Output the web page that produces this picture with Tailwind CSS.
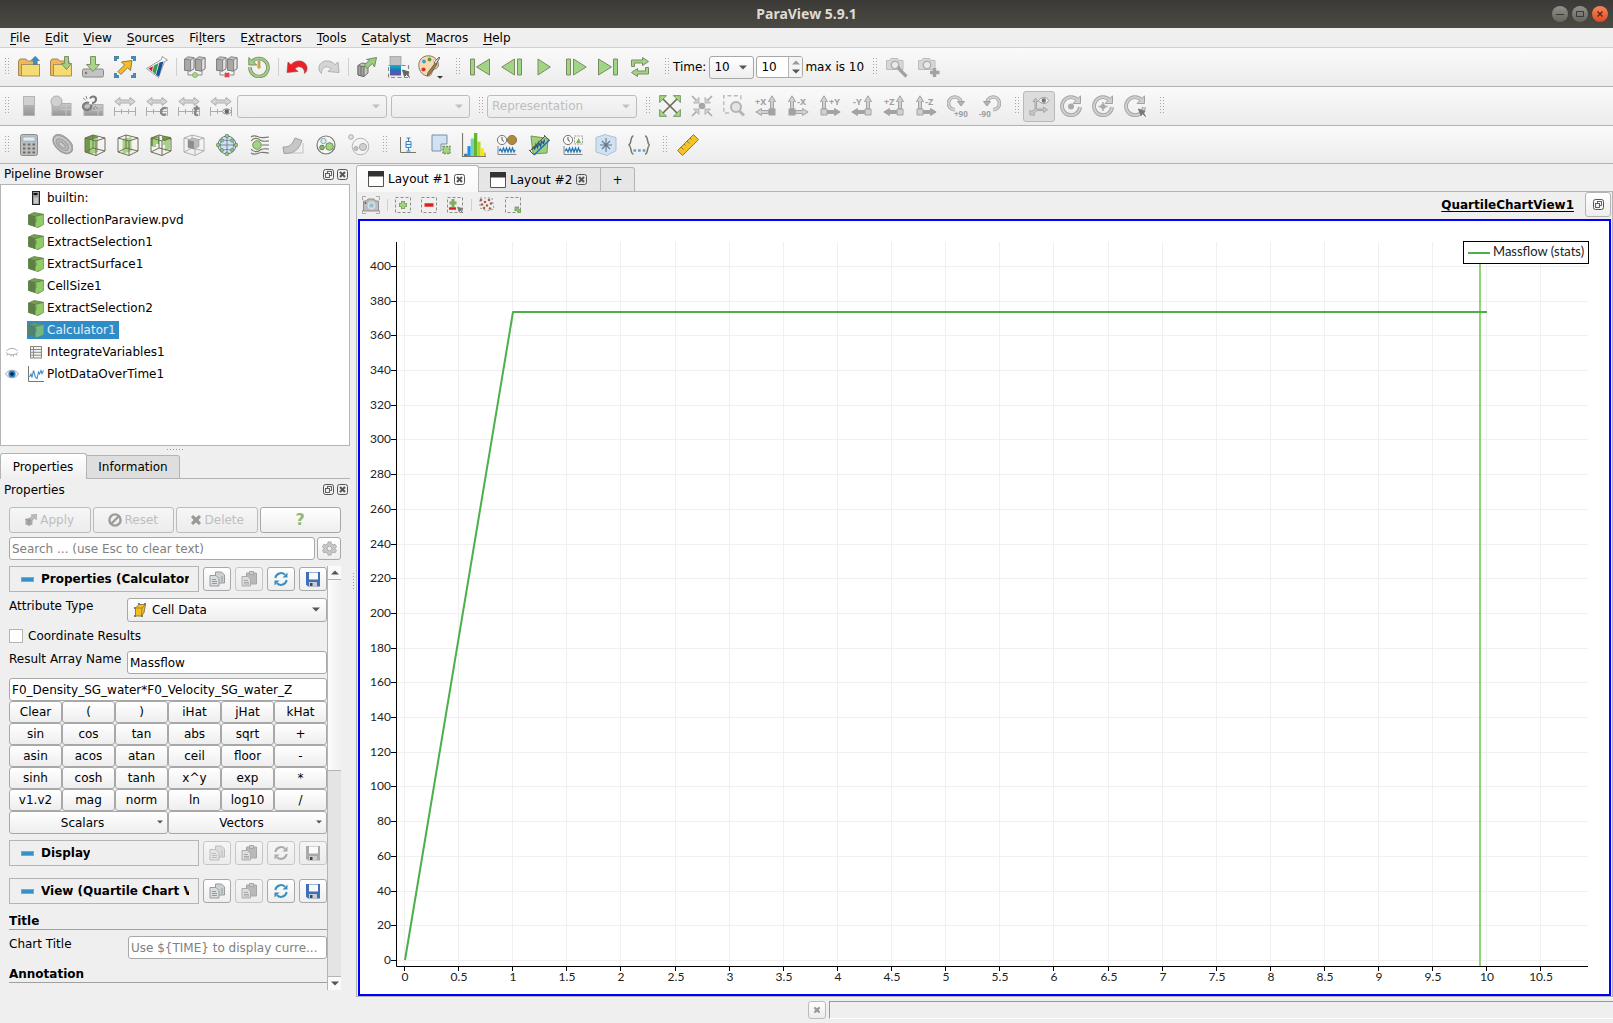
<!DOCTYPE html>
<html lang="en">
  <head>
    <meta charset="UTF-8" />
    <meta name="viewport" content="width=device-width, initial-scale=1.0" />
    <title>ParaView 5.9.1</title>
    <!-- Tailwind -->
    <script src="https://cdn.jsdelivr.net/npm/@tailwindcss/browser@4"></script>
    <style>
      body {
        font-family: "DejaVu Sans", sans-serif;
      }
    </style>
  </head>
  <body class="h-screen flex flex-col overflow-hidden bg-[#efefef] text-xs text-black">
    <!-- Icons -->
    <svg class="absolute size-0">
      <defs>
        <linearGradient id="rainbow" x1="0" y1="0" x2="0" y2="1">
          <stop offset="0" stop-color="#14b4c4" />
          <stop offset="0.5" stop-color="#2070b8" />
          <stop offset="1" stop-color="#7a4a9a" />
        </linearGradient>
        <linearGradient id="shade" x1="0" y1="0" x2="0" y2="1">
          <stop offset="0" stop-color="#cacaca" />
          <stop offset="1" stop-color="#969696" />
        </linearGradient>
      </defs>
      <!-- file -->
      <symbol id="i-open" viewBox="0 0 22 22">
        <path d="M.5 19.500V5L2 3h6l1.500 2H19v14z" fill="#efb65c" stroke="#a58a52" />
        <rect x="3.500" y="8.500" width="18" height="11.500" fill="#f5dc72" stroke="#a5915a" />
        <path d="M15.500 8.500V4.500H13L17.200.3l4.200 4.200h-2.600v4z" fill="#3592c8" stroke="#47738f" stroke-width=".6" />
      </symbol>
      <symbol id="i-load" viewBox="0 0 22 22">
        <path d="M.5 19.500V5L2 3h6l1.500 2H19v14z" fill="#efb65c" stroke="#a58a52" />
        <path d="M3.500 20V8.500h18V20z" fill="#f5dc72" stroke="#a5915a" />
        <path d="M14.500.5h4v7h3L16.500 13.500 11.500 7.500h3z" fill="#a1cf86" stroke="#7e8f64" />
      </symbol>
      <symbol id="i-save" viewBox="0 0 22 22">
        <rect x=".5" y="13" width="21" height="8" rx="1.500" fill="#c4c4c4" stroke="#888" />
        <circle cx="4" cy="17" r="1.200" fill="#777" />
        <path d="M8.500.5h5v8h4L11 15.500 4.500 8.500h4z" fill="#a9d48c" stroke="#7e8f64" />
      </symbol>
      <symbol id="i-extract" viewBox="0 0 22 22">
        <path d="M1.500 5V1.500H5M17 1.500h3.500V5M20.500 17v3.500H17M5 20.500H1.500V17" fill="none" stroke="#5f7480" stroke-width="3" />
        <path d="M1.500 5V1.500H5M17 1.500h3.500V5M20.500 17v3.500H17M5 20.500H1.500V17" fill="none" stroke="#3a93c4" stroke-width="2" />
        <path d="M4 15.500l6.500-6.500L7.500 6 18 4.500 16.500 14.500l-3-2.800L7 18.500z" fill="#f5bd1f" stroke="#8a7a4a" />
      </symbol>
      <symbol id="i-flask" viewBox="0 0 22 22">
        <path d="M.5 12.500L15.500 3.500l.5-3 5.500 3.500-3 1.500L12.500 21.500z" fill="#fafafa" stroke="#888" stroke-width=".8" />
        <path d="M2.500 12.500l4.500-2.500-1 5.500z" fill="#d62032" />
        <path d="M8 9.500l4.500-2.500-3 11.500-3-3z" fill="#2fa24a" />
        <path d="M13.500 6.500l4-1-4.500 15-3-1.500z" fill="#17519e" />
      </symbol>
      <symbol id="i-server" viewBox="0 0 22 22">
        <g stroke="#808080" stroke-width=".9">
          <path d="M.6 3L4 .8l6 .8v11L6.500 15l-6-.8z" fill="#c4c4c0" />
          <path d="M.6 3l6 1V15l-6-.8z" fill="#a9a9a4" />
          <path d="M6.600 4L10 1.600v11L6.600 15z" fill="#e4e0e2" />
          <path d="M11.600 3L15 .8l6 .8v11L17.500 15l-6-.8z" fill="#c4c4c0" />
          <path d="M11.600 3l6 1V15l-6-.8z" fill="#a9a9a4" />
          <path d="M17.600 4L21 1.600v11L17.600 15z" fill="#e4e0e2" />
          <path d="M4 15v4h14v-4" fill="none" />
        </g>
      </symbol>
      <symbol id="i-connect" viewBox="0 0 22 22">
        <use href="#i-server" width="22" height="22" />
        <circle cx="11" cy="19" r="2.500" fill="#a3dc86" stroke="#7d9a69" stroke-width=".7" />
      </symbol>
      <symbol id="i-disconnect" viewBox="0 0 22 22">
        <use href="#i-server" width="22" height="22" />
        <path d="M9 17l4 4m0-4l-4 4" stroke="#d44" stroke-width="2.400" />
      </symbol>
      <symbol id="i-recent" viewBox="0 0 22 22">
        <path d="M3.500 6.500A9 9 0 1 1 2 11" fill="none" stroke="#7e8f64" stroke-width="3.600" />
        <path d="M.8 1.500v7.500h8z" fill="#a1cf86" stroke="#7e8f64" />
        <path d="M3.500 6.500A9 9 0 1 1 2 11" fill="none" stroke="#a1cf86" stroke-width="2" />
        <path d="M10 5h2v7h-2z" fill="#e3b23c" stroke="#9b854e" stroke-width=".6" />
        <circle cx="11" cy="11" r="1.600" fill="#d6a93a" />
      </symbol>
      <symbol id="i-undo" viewBox="0 0 22 22">
        <path d="M1 16.500L2 6l3 2.700C9 3.500 19 3 21 11c.4 2.500-.5 5-2.500 6.500C19 12 13.500 8.500 9 12.500l3 3z" fill="#ea2127" stroke="#a63a3a" stroke-width=".6" />
      </symbol>
      <symbol id="i-redo" viewBox="0 0 22 22">
        <path d="M21 16.500L20 6l-3 2.700C13 3.500 3 3 1 11c-.4 2.500.5 5 2.500 6.500C3 12 8.500 8.500 13 12.500l-3 3z" fill="#d4d4d4" stroke="#b0b0b0" />
      </symbol>
      <symbol id="i-query" viewBox="0 0 22 22">
        <g stroke="#6a6a62" stroke-width=".9">
          <path d="M2 9.500l4-2.500 6 1V17l-4 3.500-6-1.500z" fill="#c6c6c2" />
          <path d="M2 9.500l6 1.200v9.800l-6-1.500z" fill="#a4a4a0" />
          <path d="M5 10v9.700M8 10.700l4-2.700" fill="none" />
        </g>
        <path d="M8.500 9l5-5L10.500 3.500 20.500 1.500 18.500 11l-2-3.500-5.500 5z" fill="#98cf80" stroke="#7a8a62" />
      </symbol>
      <symbol id="i-selcolor" viewBox="0 0 22 22">
        <rect x=".5" y="9.500" width="20" height="12" fill="none" stroke="#888" stroke-width="1.200" stroke-dasharray="4 2.500" />
        <rect x="2" y=".5" width="11" height="9" fill="#c2c2c2" stroke="#999" stroke-width=".7" />
        <rect x="2" y="9" width="11" height="10.500" fill="url(#rainbow)" />
        <path d="M21.500 21.500l-3-3-2 2-2-6.500 6.500 2-2 2z" fill="#666" stroke="#666" />
      </symbol>
      <symbol id="i-palette" viewBox="0 0 26 24">
        <path d="M10 .8C4 1 .8 5.500.8 10.500c0 6 4.500 10.500 9.500 10.500 4 0 3-4 5-6s4-1 5-4C21 5 16 .6 10 .8z" fill="#f9d9b0" stroke="#857868" />
        <circle cx="6" cy="6.500" r="1.900" fill="#3f9fd0" /><circle cx="11.500" cy="4.500" r="1.900" fill="#5c9a3c" />
        <circle cx="5.500" cy="14.500" r="2.100" fill="#cf3b2b" /><circle cx="17" cy="6" r="1.600" fill="#fff" stroke="#a99" stroke-width=".5" />
        <path d="M21.500 2c0 3-3 4-3 8l-6.500 9-3 2 1-3.500L16.500 9c0-4 3-4 5-7z" fill="#9a8050" stroke="#5c5238" stroke-width=".8" />
        <path d="M21.500 2c0 3-3 4-3 7l-2-1c0-3 3-3 5-6z" fill="#eee" stroke="#5c5238" stroke-width=".6" />
        <path d="M19 21h6l-3 2.800z" fill="#333" />
      </symbol>
      <!-- VCR -->
      <symbol id="i-first" viewBox="0 0 22 22">
        <path d="M1.500 3h4v16h-4zM20.500 3v16L7.500 11z" fill="#a1d586" stroke="#7d8a64" />
      </symbol>
      <symbol id="i-back" viewBox="0 0 22 22">
        <path d="M16.500 3h4v16h-4zM13.500 3v16L.8 11z" fill="#a1d586" stroke="#7d8a64" />
      </symbol>
      <symbol id="i-play" viewBox="0 0 22 22">
        <path d="M5 3v16L17.300 11z" fill="#a1d586" stroke="#7d8a64" />
      </symbol>
      <symbol id="i-fwd" viewBox="0 0 22 22">
        <path d="M1.500 3h4v16h-4zM8.500 3v16L21.200 11z" fill="#a1d586" stroke="#7d8a64" />
      </symbol>
      <symbol id="i-last" viewBox="0 0 22 22">
        <path d="M16.500 3h4v16h-4zM1.500 3v16L14.500 11z" fill="#a1d586" stroke="#7d8a64" />
      </symbol>
      <symbol id="i-loop" viewBox="0 0 22 22">
        <path d="M2.500 10.500V4h11V1.500L19.500 5.500 13.500 9.500V7h-8v3.500zM19.500 11.500V18h-11v2.500L2.500 16.500 8.500 12.500V15h8v-3.500z" fill="#a1d586" stroke="#7d8a64" />
      </symbol>
      <symbol id="i-camera" viewBox="0 0 22 22">
        <path d="M.6 4.500h3L5 2.500h6.500l1.500 2h4v9H.6z" fill="#d8d8d8" stroke="#bbb" />
        <circle cx="9" cy="9" r="3.800" fill="#e9e9e9" stroke="#b0b0b0" stroke-width="1.500" />
      </symbol>
      <symbol id="i-camtool" viewBox="0 0 22 22">
        <use href="#i-camera" width="22" height="22" />
        <path d="M12 10.500l2 3.500 6.500 6.500" fill="none" stroke="#a2a2a2" stroke-width="3.200" />
      </symbol>
      <symbol id="i-camplus" viewBox="0 0 22 22">
        <use href="#i-camera" width="22" height="22" />
        <path d="M16.500 12v9M12 16.500h9.500" stroke="#a2a2a2" stroke-width="3.400" />
      </symbol>
      <!-- colour -->
      <symbol id="i-legend" viewBox="0 0 22 22">
        <rect x="5.500" y="1.500" width="11" height="19" fill="url(#shade)" stroke="#b5b5b5" />
        <path d="M6 2h10v8H6z" fill="#d0d0d0" />
      </symbol>
      <symbol id="i-mapedit" viewBox="0 0 22 22">
        <rect x="2" y="8.500" width="19" height="12" fill="url(#shade)" stroke="#b0b0b0" />
        <path d="M16 9v11M11 14.500h10" stroke="#c4c4c4" />
        <circle cx="6.500" cy="6.500" r="5.500" fill="#d0d0d0" stroke="#aaa" />
      </symbol>
      <symbol id="i-mapsep" viewBox="0 0 22 22">
        <rect x="2" y="9.500" width="19" height="11" fill="url(#shade)" stroke="#b0b0b0" />
        <path d="M16 10v10M10 15h11" stroke="#c4c4c4" />
        <path d="M8 3.500C10 .5 14 1 14 4.500c0 2-2 3.500-4 3.500M7 8c-3-1-6 1-6 3.500S4 16 7 14.500c2-1 2.500-3 2-4.500" fill="none" stroke="#7c7c7c" stroke-width="2.200" />
        <path d="M1 3l2.500 2M4 1l1 3M13 11l3 3M12 12v3" stroke="#888" />
      </symbol>
      <symbol id="i-range" viewBox="0 0 22 22">
        <path d="M.8 6.500L6 2.500V5h10V2.500L21.200 6.500 16 10.500V8H6v2.500z" fill="#d4d4d4" stroke="#adadad" />
        <path d="M.5 12v9M21.500 12v9M.5 16.500h21M7.500 14v5M14.500 14v5" fill="none" stroke="#adadad" />
      </symbol>
      <symbol id="i-rangec" viewBox="0 0 22 22">
        <use href="#i-range" width="22" height="22" />
        <path d="M20.500 13.500c-2-1.500-5.500 0-5.500 3.500 0 3 3 3.500 5 2" fill="none" stroke="#858585" stroke-width="2.400" />
      </symbol>
      <symbol id="i-ranget" viewBox="0 0 22 22">
        <use href="#i-range" width="22" height="22" />
        <path d="M19 10.500l-2 8c0 1.500 1.500 2 3 1M15.500 13.500h5.500" fill="none" stroke="#858585" stroke-width="2.300" />
      </symbol>
      <symbol id="i-rangeeye" viewBox="0 0 22 22">
        <use href="#i-range" width="22" height="22" />
        <path d="M12 16.500c2.500-3.500 7-3.500 9.500 0-2.500 3.500-7 3.500-9.500 0z" fill="#eee" stroke="#888" />
        <circle cx="16.800" cy="16.500" r="2.200" fill="#666" />
      </symbol>
      <!-- camera -->
      <symbol id="i-reset" viewBox="0 0 22 22">
        <path d="M3 3l16 16M19 3L3 19" stroke="#6a6a50" stroke-width="1.600" />
        <path d="M.6.6h7l-7 7zM21.400.6v7l-7-7zM.6 21.400v-7l7 7zM21.400 21.400h-7l7-7z" fill="#9fd77f" stroke="#6f8558" stroke-width=".8" />
      </symbol>
      <symbol id="i-zoomdata" viewBox="0 0 22 22">
        <path d="M1 1l5 5M21 1l-5 5M1 21l5-5M21 21l-5-5" stroke="#aaa" stroke-width="1.600" />
        <path d="M8 8H2.500L8 2.500zM14 8V2.500L19.500 8zM8 14v5.500L2.500 14zM14 14h5.500L14 19.500z" fill="#d2d2d2" stroke="#aaa" stroke-width=".8" />
        <circle cx="11" cy="11" r="3.300" fill="#a6a6a6" />
      </symbol>
      <symbol id="i-zoombox" viewBox="0 0 22 22">
        <path d="M6 18H.8V.8h17V6" fill="none" stroke="#bbb" stroke-width="1.400" stroke-dasharray="4 2.500" />
        <circle cx="13" cy="12" r="5" fill="#e4e4e4" stroke="#b4b4b4" stroke-width="2" />
        <path d="M16.500 16l4.500 4.500" stroke="#b4b4b4" stroke-width="3" />
      </symbol>
      <symbol id="i-axl" viewBox="0 0 22 22">
        <path d="M15.500 13.500v-7h-2L17 .8l3.500 5.700h-2v7z" fill="#d0d0d0" stroke="#a3a3a3" />
        <path d="M13.500 15.500h-7v-2L.8 17l5.700 3.500v-2h7z" fill="currentColor" stroke="#a3a3a3" />
      </symbol>
      <symbol id="i-axr" viewBox="0 0 22 22">
        <path d="M3.500 13.500v-7h-2L5 .8l3.500 5.700h-2v7z" fill="#d0d0d0" stroke="#a3a3a3" />
        <path d="M8.500 15.500h7v-2l5.700 3.500-5.700 3.500v-2h-7z" fill="currentColor" stroke="#a3a3a3" />
      </symbol>
      <symbol id="i-rotcw" viewBox="0 0 22 22">
        <path d="M8 14.500H6.500A6.300 6.300 0 1 1 14 7" fill="none" stroke="#a8a8a8" stroke-width="3.600" />
        <path d="M8 14.500H6.500A6.300 6.300 0 1 1 14 7" fill="none" stroke="#d4d4d4" stroke-width="1.800" />
        <path d="M10.500 6.500h7L14 11z" fill="#b4b4b4" stroke="#a0a0a0" />
      </symbol>
      <symbol id="i-rotate" viewBox="0 0 22 22">
        <path d="M18 5.500A9 9 0 1 0 20 12" fill="none" stroke="#a4a4a4" stroke-width="3.800" />
        <path d="M13 8.500L20.500.8v7.700z" fill="#cfcfcf" stroke="#a4a4a4" />
        <path d="M18 5.500A9 9 0 1 0 20 12" fill="none" stroke="#cfcfcf" stroke-width="2" />
      </symbol>
      <symbol id="i-axesvis" viewBox="0 0 22 22">
        <path d="M7 14V6.500H5L7.500 3 10 6.500H8.500V14h7v-2l4 2.800-4 2.700v-2H9L5.500 18.500l1.500 1.500H2v-5l1.500 1.500z" fill="#c8c8c8" stroke="#a6a6a6" />
        <path d="M10.500 5.500c3-4 7.500-4 10.500 0-3 4-7.500 4-10.500 0z" fill="#f4f4f4" stroke="#999" />
        <circle cx="15.800" cy="5.500" r="2.200" fill="#777" />
      </symbol>
      <!-- filters -->
      <symbol id="i-calc" viewBox="0 0 22 22">
        <rect x="2.500" y=".5" width="17" height="21" rx="2" fill="#bdbdbd" stroke="#8c8c8c" />
        <rect x="5" y="3" width="12" height="4" fill="#dcecfa" stroke="#8aa" stroke-width=".6" />
        <path d="M5 10.500h2.500m2.200 0h2.600m2.200 0H17M5 14.500h2.500m2.200 0h2.600m2.200 0H17M5 18.500h2.500m2.200 0h2.600m2.200 0H17" stroke="#6c6c60" stroke-width="2.200" />
      </symbol>
      <symbol id="i-contour" viewBox="0 0 22 22">
        <g fill="#b3b3b3" stroke="#9c9c9c" transform="rotate(42 11 11)">
          <path d="M-.5 8C2 1 20 1 22.500 8v3c-2 8-20 8-23 0z" />
          <ellipse cx="11" cy="10" rx="11" ry="6.500" fill="#c9c9c9" />
          <ellipse cx="11" cy="10.500" rx="7.500" ry="4.200" fill="#b8b8b8" />
          <ellipse cx="11" cy="11" rx="4" ry="2" fill="#c9c9c9" />
        </g>
      </symbol>
      <symbol id="i-wire" viewBox="0 0 22 22">
        <path d="M1 4l8-3 12 3v13l-9 4.500L1 18zM1 4l11 3 9-3M12 7v14.500M9 1v13l12 3M9 14l-8 4" fill="none" />
      </symbol>
      <symbol id="i-clip" viewBox="0 0 22 22">
        <path d="M1 4l8-3 5 1.500v15L7 20 1 18z" fill="#6c9c46" />
        <path d="M6 6l8-2.500v14L6 20z" fill="#a4d384" />
        <use href="#i-wire" width="22" height="22" stroke="#6f6f55" />
      </symbol>
      <symbol id="i-slice" viewBox="0 0 22 22">
        <path d="M5.500 5l9-2v14l-9 3z" fill="#a4d384" />
        <use href="#i-wire" width="22" height="22" stroke="#6f6f55" />
      </symbol>
      <symbol id="i-threshold" viewBox="0 0 22 22">
        <path d="M1 4l6-2 2 1v7H6v3l-5-1zM12 2l9 1v3l-5 2-4-2z" fill="#6c9c46" />
        <path d="M3 5l5-1.500V10H6v3l-3-1zM13 8l7-3.500V15l-5 2v-6h-2z" fill="#a4d384" />
        <use href="#i-wire" width="22" height="22" stroke="#6f6f55" />
      </symbol>
      <symbol id="i-subset" viewBox="0 0 22 22">
        <use href="#i-wire" width="22" height="22" stroke="#b0b0b0" />
        <path d="M5 6l5-2 6 1.500v7l-5 2.500-6-1.500z" fill="#bcbcbc" stroke="#9e9e9e" stroke-width=".6" />
        <path d="M5 6l6 1.500v7.500l-6-1.500z" fill="#8e8e8e" />
      </symbol>
      <symbol id="i-glyph" viewBox="0 0 22 22">
        <circle cx="11" cy="11" r="9" fill="#cfe2f3" stroke="#5e7a8c" />
        <path d="M2 11h18M11 2v18M6 5c2 2 8 2 10 0M6 17c2-2 8-2 10 0M6 5c-2 4-2 8 0 12M16 5c2 4 2 8 0 12" fill="none" stroke="#5e7a8c" stroke-width=".8" />
        <g fill="#98cc78" stroke="#66804f" stroke-width=".7">
          <circle cx="11" cy="2" r="1.800" /><circle cx="11" cy="20" r="1.800" /><circle cx="2" cy="11" r="1.800" />
          <circle cx="20" cy="11" r="1.800" /><circle cx="6" cy="6.500" r="1.600" /><circle cx="16" cy="6.500" r="1.600" />
          <circle cx="6" cy="16" r="1.600" /><circle cx="16" cy="16" r="1.600" />
        </g>
      </symbol>
      <symbol id="i-stream" viewBox="0 0 22 22">
        <path d="M2 3c4-3 6 0 10 .5 3 .5 5-.5 8-.5M2 7c3-4 7-3 10-.5 3 1.500 5 .5 8 .5M13 11h7M2 15c3 4 7 3 10 .5 3-1.500 5-.5 8-.5M2 19c4 3 6 0 10-.5 3-.5 5 .5 8 .5" fill="none" stroke="#77776a" stroke-width="1.200" />
        <circle cx="8" cy="11" r="4.300" fill="#a1d481" stroke="#7b9265" />
      </symbol>
      <symbol id="i-warp" viewBox="0 0 22 22">
        <path d="M3 19h18V9" fill="none" stroke="#c2c2c2" />
        <path d="M1 13c8 0 9-3 12-9l7 2.500c-3 8-6 13-18 13z" fill="#c6c6c6" stroke="#a2a2a2" />
      </symbol>
      <symbol id="i-group" viewBox="0 0 22 22">
        <circle cx="11" cy="11" r="9" fill="#f6f6f6" stroke="#777" stroke-width="1.200" />
        <circle cx="8.500" cy="7" r="2.700" fill="#d6ebf2" stroke="#8fa5a5" /><circle cx="7" cy="13.500" r="2.300" fill="#8bb86c" stroke="#667c50" />
        <circle cx="14.500" cy="12.500" r="3.800" fill="#a1d481" stroke="#6f8a58" />
      </symbol>
      <symbol id="i-extractlvl" viewBox="0 0 22 22">
        <circle cx="12.500" cy="12.500" r="8.300" fill="#f4f4f4" stroke="#b4b4b4" />
        <circle cx="15" cy="13" r="3.600" fill="#d0d0d0" stroke="#aaa" /><circle cx="8" cy="14.500" r="2" fill="#c4c4c4" stroke="#aaa" />
        <circle cx="3" cy="3" r="2.300" fill="#e4e4e4" stroke="#aaa" />
      </symbol>
      <symbol id="i-quartile" viewBox="0 0 22 22">
        <path d="M3.500 3v15.500H19" fill="none" stroke="#77776a" />
        <path d="M11.500 4v13M9.500 4h4M9.500 17h4" stroke="#3a86c4" /><path d="M9 7.500h5v6H9zM9 10.500h5" fill="#e8f2fb" stroke="#3a86c4" />
      </symbol>
      <symbol id="i-query2" viewBox="0 0 22 22">
        <path d="M2 1h15v9h-6v7H2z" fill="#cfe3f5" stroke="#7d8f9c" />
        <rect x="13" y="12.500" width="7" height="7" fill="#a1d481" stroke="#7b9265" stroke-width="1.500" stroke-dasharray="2 1" />
      </symbol>
      <symbol id="i-hist" viewBox="0 0 22 22">
        <path d="M2 19h3v3H2z" fill="#3c6ea8" /><path d="M5 12h3v10H5z" fill="#1492f0" /><path d="M8 5h3v17H8z" fill="#77cfc0" />
        <path d="M11 0h3v22h-3z" fill="#62b82a" /><path d="M14 8h3v14h-3z" fill="#b0d62f" /><path d="M17 14h3v8h-3z" fill="#ffe600" /><path d="M20 18h2v4h-2z" fill="#f5b020" />
        <path d="M.5 0v21.500h21.500" fill="none" stroke="#77776a" />
      </symbol>
      <symbol id="i-wave" viewBox="0 0 22 22">
        <path d="M2 12v8.500h18.500" fill="none" stroke="#888" />
        <path d="M3 17l1.500-2 1.500 3 1.500-4 1.500 4 1.500-4 1.500 4 1.500-4 1.500 4 1.500-4 1.500 4 1-2" fill="none" stroke="#2478b8" stroke-width="1.300" />
        <circle cx="6" cy="6" r="4.600" fill="#f8f8f8" stroke="#777" /><path d="M6 3v3l2 1.500" fill="none" stroke="#555" />
      </symbol>
      <symbol id="i-plottime" viewBox="0 0 22 22">
        <use href="#i-wave" width="22" height="22" /><circle cx="16" cy="6" r="4.600" fill="#b08a3c" stroke="#8a784e" />
      </symbol>
      <symbol id="i-plotsel" viewBox="0 0 22 22">
        <use href="#i-wave" width="22" height="22" />
        <rect x="12.500" y="2" width="8" height="8" fill="none" stroke="#999" stroke-dasharray="2 1.200" /><path d="M14 9l2.500-5L19 9z" fill="#7fb45e" />
      </symbol>
      <symbol id="i-plotline" viewBox="0 0 22 22">
        <path d="M2 2l17 2.500-1 14.500L4 20z" fill="#9fd080" stroke="#6e9a54" />
        <path d="M5 21L20.500 6" stroke="#1c6cb0" stroke-width="1.300" />
        <path d="M3 15l2-2 .5 2.500 1.500-5 1.500 3 1-5 2 3.500 1-4.500 2 2 1-4" fill="none" stroke="#205a90" stroke-width="1.400" />
        <path d="M1 17L16 2M0 16l5 5M15 1l6 6" stroke="#5a5a4a" />
      </symbol>
      <symbol id="i-probe" viewBox="0 0 22 22">
        <path d="M1 3.500L10 .6l11 3v13L12 21.500 1 18z" fill="#cfe2f4" stroke="#aebfce" />
        <path d="M11 4v14M5 11h12M7 7l8 8M15 7l-8 8" stroke="#68788a" stroke-width="1.100" />
      </symbol>
      <symbol id="i-braces" viewBox="0 0 22 22">
        <path d="M5.500 2C2 2 4 9 1 11c3 2 1 9 4.500 9M17 2c3.500 0 1.500 7 4.500 9-3 2-1 9-4.500 9" fill="none" stroke="#77776a" stroke-width="1.500" />
        <path d="M5.500 16.500h2.600m2 0h2.600m2 0h2.600" stroke="#5ba3c8" stroke-width="2.600" />
      </symbol>
      <symbol id="i-ruler" viewBox="0 0 22 22">
        <path d="M.6 16.500L16.500.6l5 5L5.500 21.500z" fill="#f3c423" stroke="#8e7a3a" />
        <path d="M4 13l2.500 2.500M7 10l1.500 1.500M10 7l2.500 2.500M13 4l1.500 1.500" stroke="#8e7a3a" />
      </symbol>
      <!-- tree -->
      <symbol id="i-cube" viewBox="0 0 16 16">
        <path d="M.5 3L6 .6l9.500 1.700v10.200L10 15.500.5 12.500z" fill="#74a350" stroke="#67864e" stroke-width=".9" />
        <path d="M.5 3L7 4.500v10L.5 12.500z" fill="#5b8145" />
        <path d="M7 4.500l8.500-2.200v10.200L9 15.300l-2-.8z" fill="#8fcb66" />
        <path d="M.5 3L7 4.500l8.500-2.200M7 4.500v10.500M8 6v4l-7 2" fill="none" stroke="#5f7a4a" stroke-width=".8" />
      </symbol>
      <symbol id="i-builtin" viewBox="0 0 16 16">
        <rect x="4.500" y="1.500" width="7" height="13" fill="#9a9a9a" stroke="#222" />
        <path d="M5.500 4h4" stroke="#111" stroke-width="2" /><path d="M6 7.500h4v6H6z" fill="#c8c8c8" />
      </symbol>
      <symbol id="i-sheet" viewBox="0 0 16 16">
        <rect x="2.500" y="2.500" width="11" height="11.500" fill="#f2f2f2" stroke="#8a8a80" />
        <path d="M5.500 2.500V14M3 5.500h11M3 8.300h11M3 11.200h11" stroke="#8a8a80" />
      </symbol>
      <symbol id="i-plot" viewBox="0 0 16 16">
        <path d="M.5 0v15.500H16" fill="none" stroke="#77776a" />
        <path d="M1.500 11l1.500-3 1 3.500 1.500-7 2 7 1.500 1 1.500-6.500 1 2 1.500-3.500 1 3 1.500-3" fill="none" stroke="#3e8fd0" stroke-width="1.100" />
      </symbol>
      <symbol id="i-eye" viewBox="0 0 14 10">
        <path d="M.5 5C4 0 10 0 13.500 5 10 10 4 10 .5 5z" fill="#f4f4f4" stroke="#a8a8a8" />
        <circle cx="7" cy="5" r="3.600" fill="#2a86c4" /><circle cx="7" cy="5" r="1.800" fill="#0a2238" />
      </symbol>
      <symbol id="i-eyeclosed" viewBox="0 0 14 10">
        <path d="M1.500 4C4 .5 10 .5 12.500 4M1 5.500c3 3 9 3 12 0M3 7L2 8.500M6 8v1.500M8.500 8v1.500M11 7l1 1.500" fill="none" stroke="#aaa" />
      </symbol>
      <!-- panels -->
      <symbol id="i-float" viewBox="0 0 11 11">
        <rect x=".5" y=".5" width="10" height="10" rx="2" fill="none" stroke="#555" />
        <rect x="4.500" y="2.500" width="4" height="4" fill="none" stroke="#555" stroke-width=".9" /><rect x="2.500" y="4.500" width="4" height="4" fill="#efefef" stroke="#555" stroke-width=".9" />
      </symbol>
      <symbol id="i-close" viewBox="0 0 11 11">
        <rect x=".5" y=".5" width="10" height="10" rx="2" fill="none" stroke="#555" />
        <path d="M3 3l5 5M8 3L3 8" stroke="#555" stroke-width="2" />
      </symbol>
      <symbol id="i-apply" viewBox="0 0 12 12">
        <path d="M.5 5L4 4l3.500 1v5.500L4 11.700.5 10.500z" fill="#a8a8a8" /><path d="M4 6.500v5M.5 5.200L4 6.500l3.500-1.300" stroke="#8d8d8d" stroke-width=".8" fill="none" />
        <path d="M4 4.500L7.500 2 6 .8 12 .3l-.8 5.500L9.500 4 7 6.500z" fill="#bbb" stroke="#a2a2a2" stroke-width=".6" />
      </symbol>
      <symbol id="i-ban" viewBox="0 0 14 14">
        <circle cx="7" cy="7" r="5.600" fill="none" stroke="#9c9c9c" stroke-width="2.400" /><path d="M3 11l8-8" stroke="#9c9c9c" stroke-width="2.400" />
      </symbol>
      <symbol id="i-cross" viewBox="0 0 12 12">
        <path d="M1 3l2-2 3 2.500L9 1l2 2-2.500 3L11 9l-2 2-3-2.500L3 11 1 9l2.500-3z" fill="#9a9a9a" />
      </symbol>
      <symbol id="i-gear" viewBox="0 0 16 16">
        <path d="M6.500 1h3l.5 2 2 1.200 2-.6 1.500 2.600L14 7.700v.8l1.500 1.500L14 12.500l-2-.6L10 13l-.5 2h-3L6 13l-2-1.100-2 .6L.5 10 2 8.500v-.8L.5 6.200 2 3.600l2 .6L6 3z" fill="#c8c8c8" stroke="#a6a6a6" />
        <circle cx="8" cy="8" r="2.600" fill="#ededed" stroke="#a6a6a6" />
      </symbol>
      <symbol id="i-copy" viewBox="0 0 16 16">
        <path d="M6.500 1h6l3 3v8h-9z" fill="#ccd1d2" stroke="#959b9b" /><path d="M1 4.500h6l3 3V15H1z" fill="#d9dddd" stroke="#959b9b" />
        <path d="M3 8.500h4M3 10.500h5M3 12.500h5M12 6h2M12 8h2M12 10h2" stroke="#959b9b" />
      </symbol>
      <symbol id="i-paste" viewBox="0 0 16 16">
        <path d="M5.500 2h10v11h-10z" fill="#b9b9b9" stroke="#a6a6a6" /><path d="M8.500.5h4v3h-4z" fill="#cfcfcf" stroke="#a6a6a6" />
        <path d="M1 5.500h6l2.500 3V15H1z" fill="#dcdcdc" stroke="#adadad" /><path d="M3 9.500h4M3 11.500h5M3 13h5" stroke="#aaa" />
      </symbol>
      <symbol id="i-refresh" viewBox="0 0 16 16">
        <path d="M2.300 7A5.800 5.800 0 0 1 12 3.700M13.700 9A5.800 5.800 0 0 1 4 12.300" fill="none" stroke="currentColor" stroke-width="2" />
        <path d="M14.500 1.500v5H9.500zM1.500 14.500v-5h5z" fill="currentColor" />
      </symbol>
      <symbol id="i-floppy" viewBox="0 0 16 16">
        <path d="M1 1h14v14.500H3L1 13.500z" fill="currentColor" /><path d="M4 1.500h9v7H4z" fill="#fafafa" />
        <path d="M4 11h8v4.500H4z" fill="#c9ccd0" /><path d="M5 12h2.500v3H5z" fill="#444" />
      </symbol>
      <symbol id="i-cell" viewBox="0 0 14 14">
        <path d="M2.500 5L6 1.500h6.500L11 9.500 8.500 13h-6z" fill="#f5bd1f" stroke="#8e7d4c" /><path d="M2.500 5H9l3.500-3.500M9 5l-.5 8" fill="none" stroke="#a8862a" />
        <path d="M1 4h2v2H1zM5 0h2v2H5zM11 0h2v2h-2zM1 12h2v2H1zM8 12h2v2H8z" fill="#7c7c70" />
      </symbol>
      <symbol id="i-down" viewBox="0 0 8 5"><path d="M0 .5h8L4 4.500z" fill="currentColor" /></symbol>
      <symbol id="i-up" viewBox="0 0 8 5"><path d="M0 4.500h8L4 .5z" fill="currentColor" /></symbol>
      <!-- view -->
      <symbol id="i-window" viewBox="0 0 16 16">
        <path d="M.5 1h15v14.500H.5z" fill="#fff" stroke="#55554e" /><path d="M0 0h16v5.500H0z" fill="#333" />
      </symbol>
      <symbol id="i-snap" viewBox="0 0 18 18">
        <path d="M.5 4V.5H4M14 .5h3.500V4M17.500 14v3.500H14M4 17.500H.5V14" fill="none" stroke="#aaa" />
        <path d="M1.500 5h3L6 3h6l1.500 2h3v10h-15z" fill="#bdbdbd" stroke="#8f8f8f" /><circle cx="9.500" cy="9.500" r="3.600" fill="#b8d6ea" stroke="#e4e4e4" />
        <circle cx="9.500" cy="9.500" r="1.800" fill="#8fbcd9" /><circle cx="3.500" cy="7" r=".9" fill="#c33" />
      </symbol>
      <symbol id="i-box" viewBox="0 0 16 16">
        <rect x=".5" y=".5" width="15" height="15" fill="none" stroke="#8f8f85" stroke-dasharray="3 2" />
      </symbol>
      <symbol id="i-boxplus" viewBox="0 0 16 16">
        <use href="#i-box" width="16" height="16" /><path d="M8 4v8M4 8h8" stroke="#7b9a63" stroke-width="4" /><path d="M8 4.700v6.600M4.700 8h6.600" stroke="#a1d481" stroke-width="2.600" />
      </symbol>
      <symbol id="i-boxminus" viewBox="0 0 16 16">
        <use href="#i-box" width="16" height="16" /><path d="M3.500 8h9" stroke="#e02020" stroke-width="3.500" />
      </symbol>
      <symbol id="i-boxtoggle" viewBox="0 0 16 16">
        <use href="#i-box" width="16" height="16" /><path d="M6 2v8M2.500 6h7" stroke="#7fae60" stroke-width="3" /><path d="M2 11.500h7" stroke="#e02020" stroke-width="2.500" />
        <path d="M16 16l-2.500-2.500L12 15l-1.500-5 5 1.500-1.500 1.500z" fill="#777" stroke="#777" stroke-width=".6" />
      </symbol>
      <symbol id="i-boxpts" viewBox="0 0 17 16">
        <path d="M2 1h12l2 11-7 2-7-3z" fill="none" stroke="#999" stroke-dasharray="2 2" />
        <g fill="#a5604e"><circle cx="3" cy="3" r="1.300" /><circle cx="7" cy="5" r="1.300" /><circle cx="11" cy="3" r="1.300" /><circle cx="4" cy="7.500" r="1.300" /><circle cx="9" cy="8.500" r="1.300" /><circle cx="13" cy="6.500" r="1.300" /><circle cx="6" cy="11" r="1.300" /><circle cx="12" cy="11.500" r="1.300" /></g>
      </symbol>
      <symbol id="i-boxzoom" viewBox="0 0 16 16">
        <use href="#i-box" width="16" height="16" /><path d="M10 10h4l-1 1 3 3v2h-2l-3-3-1 1z" fill="#8fbf70" stroke="#6f8f58" stroke-width=".8" />
      </symbol>
      <symbol id="i-grip" viewBox="0 0 4 18">
        <path d="M.5 0v18M3.500 0v18" stroke="#a6a6a6" stroke-dasharray="1 2" />
      </symbol>
    </svg>

    <!-- Title bar -->
    <header class="h-7 shrink-0 relative flex items-center justify-center bg-linear-to-b from-[#3b3a36] to-[#4c4a44]">
      <h1 class="font-bold text-sm text-[#dfdbd2] font-['Noto_Sans',sans-serif]">ParaView 5.9.1</h1>
      <div class="absolute right-[5px] top-[6px] flex gap-1">
        <button aria-label="Minimize" class="size-4 rounded-full bg-linear-to-b from-[#92918a] to-[#66645e] flex items-center justify-center">
          <svg class="size-2" viewBox="0 0 8 8"><path d="M0 4.500h8" stroke="#3a3935" /></svg>
        </button>
        <button aria-label="Maximize" class="size-4 rounded-full bg-linear-to-b from-[#92918a] to-[#66645e] flex items-center justify-center">
          <svg class="size-2" viewBox="0 0 8 8"><path d="M.5 1.500h7v5h-7z" fill="none" stroke="#3a3935" /></svg>
        </button>
        <button aria-label="Close" class="size-4 rounded-full bg-linear-to-b from-[#f8845c] to-[#e2481c] flex items-center justify-center">
          <svg class="size-2" viewBox="0 0 8 8"><path d="M1.500 1.500l5 5M6.500 1.500l-5 5" stroke="#4a2a1c" stroke-width="1.300" /></svg>
        </button>
      </div>
    </header>

    <!-- Menu bar -->
    <nav class="h-5 shrink-0 flex items-center gap-px border-b border-[#d0d0d0] pl-[3px] underline-offset-2">
      <button class="px-[7px]"><u>F</u>ile</button>
      <button class="px-[7px]"><u>E</u>dit</button>
      <button class="px-[7px]"><u>V</u>iew</button>
      <button class="px-[7px]"><u>S</u>ources</button>
      <button class="px-[7px]">Fi<u>l</u>ters</button>
      <button class="px-[7px]">E<u>x</u>tractors</button>
      <button class="px-[7px]"><u>T</u>ools</button>
      <button class="px-[7px]"><u>C</u>atalyst</button>
      <button class="px-[7px]"><u>M</u>acros</button>
      <button class="px-[7px]"><u>H</u>elp</button>
    </nav>

    <!-- Main toolbar -->
    <div class="h-[39px] shrink-0 flex items-center gap-1 border-b border-[#b2b2b2] bg-linear-to-b from-[#fafafa] to-[#ececec]">
      <div class="flex items-center">
        <svg class="h-[18px] w-1 ml-[5px] mr-1"><use href="#i-grip" /></svg>
        <button aria-label="Open" class="w-8 flex justify-center"><svg class="size-[22px]"><use href="#i-open" /></svg></button>
        <button aria-label="Load state" class="w-8 flex justify-center"><svg class="size-[22px]"><use href="#i-load" /></svg></button>
        <button aria-label="Save data" class="w-8 flex justify-center"><svg class="size-[22px]"><use href="#i-save" /></svg></button>
        <button aria-label="Save extracts" class="w-8 flex justify-center"><svg class="size-[22px]"><use href="#i-extract" /></svg></button>
        <button aria-label="Catalyst" class="w-8 flex justify-center"><svg class="size-[22px]"><use href="#i-flask" /></svg></button>
        <div class="w-px h-[18px] ml-[3px] mr-0.5 bg-[#cfcfcf]"></div>
        <button aria-label="Connect" class="w-8 flex justify-center"><svg class="size-[22px]"><use href="#i-connect" /></svg></button>
        <button aria-label="Disconnect" class="w-8 flex justify-center"><svg class="size-[22px]"><use href="#i-disconnect" /></svg></button>
        <button aria-label="Reload" class="w-8 flex justify-center"><svg class="size-[22px]"><use href="#i-recent" /></svg></button>
        <div class="w-px h-[18px] ml-[3px] mr-0.5 bg-[#cfcfcf]"></div>
        <button aria-label="Undo" class="w-8 flex justify-center"><svg class="size-[22px]"><use href="#i-undo" /></svg></button>
        <button aria-label="Redo" class="w-8 flex justify-center"><svg class="size-[22px]"><use href="#i-redo" /></svg></button>
        <div class="w-px h-[18px] ml-[3px] mr-0.5 bg-[#cfcfcf]"></div>
        <button aria-label="Find data" class="w-8 flex justify-center"><svg class="size-[22px]"><use href="#i-query" /></svg></button>
        <button aria-label="Color palette" class="w-8 flex justify-center"><svg class="size-[22px]"><use href="#i-selcolor" /></svg></button>
        <button aria-label="Palette" class="w-8 flex justify-center"><svg class="w-[26px] h-6"><use href="#i-palette" /></svg></button>
      </div>
      <div class="flex items-center">
        <svg class="h-[18px] w-1 ml-[5px] mr-1"><use href="#i-grip" /></svg>
        <button aria-label="First frame" class="w-8 flex justify-center"><svg class="size-[22px]"><use href="#i-first" /></svg></button>
        <button aria-label="Previous frame" class="w-8 flex justify-center"><svg class="size-[22px]"><use href="#i-back" /></svg></button>
        <button aria-label="Play" class="w-8 flex justify-center"><svg class="size-[22px]"><use href="#i-play" /></svg></button>
        <button aria-label="Next frame" class="w-8 flex justify-center"><svg class="size-[22px]"><use href="#i-fwd" /></svg></button>
        <button aria-label="Last frame" class="w-8 flex justify-center"><svg class="size-[22px]"><use href="#i-last" /></svg></button>
        <button aria-label="Loop" class="w-8 flex justify-center"><svg class="size-[22px]"><use href="#i-loop" /></svg></button>
      </div>
      <div class="flex items-center">
        <svg class="h-[18px] w-1 ml-[5px] mr-1"><use href="#i-grip" /></svg>
        <label for="time">Time:</label>
        <div class="relative ml-[3px]">
          <select id="time" class="appearance-none block w-[45px] h-[23px] pl-1 rounded-[3px] border border-[#a8a8a8] bg-linear-to-b from-white to-[#eee]"><option>10</option></select>
          <svg class="absolute right-[7px] top-[9px] w-2 h-[5px] text-[#555]"><use href="#i-down" /></svg>
        </div>
        <div class="relative ml-0.5 flex w-[47px] h-[22px] rounded-[3px] border border-[#a8a8a8] bg-white overflow-hidden">
          <input aria-label="Time step" type="text" value="10" class="w-[31px] pl-1 outline-none" />
          <div class="flex-1 border-l border-[#b8b8b8] bg-[#f4f4f4] flex flex-col items-center justify-center gap-1">
            <svg class="w-2 h-[5px] text-[#999]"><use href="#i-up" /></svg>
            <svg class="w-2 h-[5px] text-[#555]"><use href="#i-down" /></svg>
          </div>
        </div>
        <span class="ml-0.5">max is 10</span>
      </div>
      <div class="flex items-center ml-0.5">
        <svg class="h-[18px] w-1 ml-[3px] mr-1"><use href="#i-grip" /></svg>
        <button aria-label="Adjust camera" class="w-8 flex justify-center"><svg class="size-[22px]"><use href="#i-camtool" /></svg></button>
        <button aria-label="Add camera link" class="w-8 flex justify-center"><svg class="size-[22px]"><use href="#i-camplus" /></svg></button>
      </div>
    </div>

    <!-- Coloring and camera toolbar -->
    <div class="h-[39px] shrink-0 flex items-center gap-1 border-b border-[#b2b2b2] bg-linear-to-b from-[#fafafa] to-[#ececec]">
      <div class="flex items-center">
        <svg class="h-[18px] w-1 ml-[5px] mr-1"><use href="#i-grip" /></svg>
        <button aria-label="Color legend" class="w-8 flex justify-center"><svg class="size-[22px]"><use href="#i-legend" /></svg></button>
        <button aria-label="Edit color map" class="w-8 flex justify-center"><svg class="size-[22px]"><use href="#i-mapedit" /></svg></button>
        <button aria-label="Separate color map" class="w-8 flex justify-center"><svg class="size-[22px]"><use href="#i-mapsep" /></svg></button>
        <button aria-label="Rescale to data range" class="w-8 flex justify-center"><svg class="size-[22px]"><use href="#i-range" /></svg></button>
        <button aria-label="Rescale to custom range" class="w-8 flex justify-center"><svg class="size-[22px]"><use href="#i-rangec" /></svg></button>
        <button aria-label="Rescale over time" class="w-8 flex justify-center"><svg class="size-[22px]"><use href="#i-ranget" /></svg></button>
        <button aria-label="Rescale to visible" class="w-8 flex justify-center"><svg class="size-[22px]"><use href="#i-rangeeye" /></svg></button>
        <div class="relative">
          <select aria-label="Color array" disabled class="appearance-none block w-[150px] h-[23px] rounded-[3px] border border-[#bcbcbc] bg-linear-to-b from-[#f6f6f6] to-[#ececec]"></select>
          <svg class="absolute right-[7px] top-[9px] w-2 h-[5px] text-[#c0c0c0]"><use href="#i-down" /></svg>
        </div>
        <div class="relative ml-1">
          <select aria-label="Component" disabled class="appearance-none block w-[79px] h-[23px] rounded-[3px] border border-[#bcbcbc] bg-linear-to-b from-[#f6f6f6] to-[#ececec]"></select>
          <svg class="absolute right-[7px] top-[9px] w-2 h-[5px] text-[#c0c0c0]"><use href="#i-down" /></svg>
        </div>
      </div>
      <div class="flex items-center">
        <svg class="h-[18px] w-1 ml-[5px] mr-1"><use href="#i-grip" /></svg>
        <div class="relative">
          <select aria-label="Representation" disabled class="appearance-none block w-[150px] h-[23px] pl-1 rounded-[3px] border border-[#bcbcbc] bg-linear-to-b from-[#f6f6f6] to-[#ececec] text-[#bebebe] opacity-100"><option>Representation</option></select>
          <svg class="absolute right-[7px] top-[9px] w-2 h-[5px] text-[#c0c0c0]"><use href="#i-down" /></svg>
        </div>
      </div>
      <div class="flex items-center">
        <svg class="h-[18px] w-1 ml-[5px] mr-1"><use href="#i-grip" /></svg>
        <button aria-label="Reset camera" class="w-8 flex justify-center"><svg class="size-[22px]"><use href="#i-reset" /></svg></button>
        <button aria-label="Zoom to data" class="w-8 flex justify-center"><svg class="size-[22px]"><use href="#i-zoomdata" /></svg></button>
        <button aria-label="Zoom to box" class="w-8 flex justify-center"><svg class="size-[22px]"><use href="#i-zoombox" /></svg></button>
        <button class="w-8 flex justify-center">
          <svg class="size-[22px] text-[#d0d0d0]" viewBox="0 0 22 22"><use href="#i-axl" /><path d="M13.500 13.500h7v7h-7z" fill="#a3a3a3" /><text x="0" y="10" font-size="9" font-weight="bold" font-family="Noto Sans" fill="#a0a0a0">+X</text></svg>
        </button>
        <button class="w-8 flex justify-center">
          <svg class="size-[22px] text-[#d0d0d0]" viewBox="0 0 22 22"><use href="#i-axr" /><path d="M1.500 13.500h7v7h-7z" fill="#a3a3a3" /><text x="10" y="10" font-size="9" font-weight="bold" font-family="Noto Sans" fill="#a0a0a0">-X</text></svg>
        </button>
        <button class="w-8 flex justify-center">
          <svg class="size-[22px] text-[#a3a3a3]" viewBox="0 0 22 22"><use href="#i-axr" /><path d="M2 14h6v6H2z" fill="#d0d0d0" stroke="#a3a3a3" /><text x="10" y="10" font-size="9" font-weight="bold" font-family="Noto Sans" fill="#a0a0a0">+Y</text></svg>
        </button>
        <button class="w-8 flex justify-center">
          <svg class="size-[22px] text-[#a3a3a3]" viewBox="0 0 22 22"><use href="#i-axl" /><path d="M14 14h6v6h-6z" fill="#d0d0d0" stroke="#a3a3a3" /><text x="2" y="10" font-size="9" font-weight="bold" font-family="Noto Sans" fill="#a0a0a0">-Y</text></svg>
        </button>
        <button class="w-8 flex justify-center">
          <svg class="size-[22px] text-[#a3a3a3]" viewBox="0 0 22 22"><use href="#i-axl" /><path d="M14 14h6v6h-6z" fill="#d0d0d0" stroke="#a3a3a3" /><text x="1" y="10" font-size="9" font-weight="bold" font-family="Noto Sans" fill="#a0a0a0">+Z</text></svg>
        </button>
        <button class="w-8 flex justify-center">
          <svg class="size-[22px] text-[#a3a3a3]" viewBox="0 0 22 22"><use href="#i-axr" /><path d="M2 14h6v6H2z" fill="#d0d0d0" stroke="#a3a3a3" /><text x="10" y="10" font-size="9" font-weight="bold" font-family="Noto Sans" fill="#a0a0a0">-Z</text></svg>
        </button>
        <button class="w-8 flex justify-center">
          <svg class="size-[22px] overflow-visible" viewBox="0 0 22 22"><use href="#i-rotcw" /><text x="7" y="22" font-size="8" font-weight="bold" font-family="Noto Sans" fill="#a0a0a0">+90</text></svg>
        </button>
        <button class="w-8 flex justify-center">
          <svg class="size-[22px] overflow-visible" viewBox="0 0 22 22"><g transform="translate(22) scale(-1 1)"><use href="#i-rotcw" /></g><text x="0" y="22" font-size="8" font-weight="bold" font-family="Noto Sans" fill="#a0a0a0">-90</text></svg>
        </button>
      </div>
      <div class="flex items-center">
        <svg class="h-[18px] w-1 ml-[5px] mr-1"><use href="#i-grip" /></svg>
        <button aria-label="Show orientation axes" class="w-8 h-[31px] flex justify-center items-center rounded-[3px] border border-[#b9b9b9] bg-[#dcdcdc]"><svg class="size-[22px]"><use href="#i-axesvis" /></svg></button>
        <button aria-label="Show center" class="w-8 flex justify-center"><svg class="size-[22px]" viewBox="0 0 22 22"><use href="#i-rotate" /><circle cx="11" cy="11.500" r="3" fill="#aaa" /></svg></button>
        <button aria-label="Reset center" class="w-8 flex justify-center"><svg class="size-[22px]" viewBox="0 0 22 22"><use href="#i-rotate" /><circle cx="11" cy="11.500" r="2.500" fill="#aaa" /><path d="M11 7v9M6.500 11.500h9" stroke="#aaa" stroke-width="1.500" /></svg></button>
        <button aria-label="Pick center" class="w-8 flex justify-center"><svg class="size-[22px]" viewBox="0 0 22 22"><use href="#i-rotate" /><path d="M21.500 21.500l-3-3-1.500 2L14.500 14l6.500 2.500-1.500 1.500z" fill="#777" stroke="#777" /></svg></button>
      </div>
      <svg class="h-[18px] w-1 ml-[5px]"><use href="#i-grip" /></svg>
    </div>

    <!-- Filters toolbar -->
    <div class="h-[38px] shrink-0 flex items-center gap-[3px] border-b border-[#b2b2b2] bg-linear-to-b from-[#fafafa] to-[#ececec]">
      <div class="flex items-center">
        <svg class="h-[18px] w-1 ml-[5px] mr-[3px]"><use href="#i-grip" /></svg>
        <button aria-label="Calculator" class="w-[33px] flex justify-center"><svg class="size-[22px]"><use href="#i-calc" /></svg></button>
        <button aria-label="Contour" class="w-[33px] flex justify-center"><svg class="size-[22px]"><use href="#i-contour" /></svg></button>
        <button aria-label="Clip" class="w-[33px] flex justify-center"><svg class="size-[22px]"><use href="#i-clip" /></svg></button>
        <button aria-label="Slice" class="w-[33px] flex justify-center"><svg class="size-[22px]"><use href="#i-slice" /></svg></button>
        <button aria-label="Threshold" class="w-[33px] flex justify-center"><svg class="size-[22px]"><use href="#i-threshold" /></svg></button>
        <button aria-label="Extract subset" class="w-[33px] flex justify-center"><svg class="size-[22px]"><use href="#i-subset" /></svg></button>
        <button aria-label="Glyph" class="w-[33px] flex justify-center"><svg class="size-[22px]"><use href="#i-glyph" /></svg></button>
        <button aria-label="Stream tracer" class="w-[33px] flex justify-center"><svg class="size-[22px]"><use href="#i-stream" /></svg></button>
        <button aria-label="Warp by vector" class="w-[33px] flex justify-center"><svg class="size-[22px]"><use href="#i-warp" /></svg></button>
        <button aria-label="Group datasets" class="w-[33px] flex justify-center"><svg class="size-[22px]"><use href="#i-group" /></svg></button>
        <button aria-label="Extract level" class="w-[33px] flex justify-center"><svg class="size-[22px]"><use href="#i-extractlvl" /></svg></button>
      </div>
      <div class="flex items-center">
        <svg class="h-[18px] w-1 ml-[5px] mr-1"><use href="#i-grip" /></svg>
        <button aria-label="Quartile chart" class="w-[33px] flex justify-center"><svg class="size-[22px]"><use href="#i-quartile" /></svg></button>
        <button aria-label="Extract selection" class="w-[33px] flex justify-center"><svg class="size-[22px]"><use href="#i-query2" /></svg></button>
        <button aria-label="Histogram" class="w-[33px] flex justify-center"><svg class="size-6"><use href="#i-hist" /></svg></button>
        <button aria-label="Plot data over time" class="w-[33px] flex justify-center"><svg class="size-[22px]"><use href="#i-plottime" /></svg></button>
        <button aria-label="Plot over line" class="w-[33px] flex justify-center"><svg class="size-[22px]"><use href="#i-plotline" /></svg></button>
        <button aria-label="Plot selection over time" class="w-[33px] flex justify-center"><svg class="size-[22px]"><use href="#i-plotsel" /></svg></button>
        <button aria-label="Probe location" class="w-[33px] flex justify-center"><svg class="size-[22px]"><use href="#i-probe" /></svg></button>
        <button aria-label="Programmable filter" class="w-[33px] flex justify-center"><svg class="size-[22px]"><use href="#i-braces" /></svg></button>
      </div>
      <div class="flex items-center">
        <svg class="h-[18px] w-1 ml-[5px] mr-1"><use href="#i-grip" /></svg>
        <button aria-label="Ruler" class="w-[33px] flex justify-center"><svg class="size-[22px]"><use href="#i-ruler" /></svg></button>
      </div>
    </div>

    <main class="flex-1 min-h-0 flex">
      <!-- Left docks -->
      <aside class="w-[350px] shrink-0 flex flex-col">
        <div class="h-5 shrink-0 flex items-center gap-[3px] pl-1 pr-[2px]">
          <h2 class="flex-1">Pipeline Browser</h2>
          <button aria-label="Float"><svg class="size-[11px]"><use href="#i-float" /></svg></button>
          <button aria-label="Close"><svg class="size-[11px]"><use href="#i-close" /></svg></button>
        </div>
        <ul class="h-[262px] shrink-0 bg-white border border-[#b4b4b4] pt-0.5 pl-1 leading-[18px]">
          <li class="h-[22px] flex items-center pl-[22px]"><span class="flex items-center gap-[3px] px-px"><svg class="size-4"><use href="#i-builtin" /></svg>builtin:</span></li>
          <li class="h-[22px] flex items-center pl-[22px]"><span class="flex items-center gap-[3px] px-px"><svg class="size-4"><use href="#i-cube" /></svg>collectionParaview.pvd</span></li>
          <li class="h-[22px] flex items-center pl-[22px]"><span class="flex items-center gap-[3px] px-px"><svg class="size-4"><use href="#i-cube" /></svg>ExtractSelection1</span></li>
          <li class="h-[22px] flex items-center pl-[22px]"><span class="flex items-center gap-[3px] px-px"><svg class="size-4"><use href="#i-cube" /></svg>ExtractSurface1</span></li>
          <li class="h-[22px] flex items-center pl-[22px]"><span class="flex items-center gap-[3px] px-px"><svg class="size-4"><use href="#i-cube" /></svg>CellSize1</span></li>
          <li class="h-[22px] flex items-center pl-[22px]"><span class="flex items-center gap-[3px] px-px"><svg class="size-4"><use href="#i-cube" /></svg>ExtractSelection2</span></li>
          <li class="h-[22px] flex items-center pl-[22px]"><span class="flex items-center gap-[3px] pl-px pr-[3px] bg-[#308cc6] text-[#e4f0f8]"><svg class="size-4 opacity-70"><use href="#i-cube" /></svg>Calculator1</span></li>
          <li class="h-[22px] flex items-center"><button aria-label="Show" class="w-[22px]"><svg class="w-[14px] h-[10px]"><use href="#i-eyeclosed" /></svg></button><span class="flex items-center gap-[3px] px-px"><svg class="size-4"><use href="#i-sheet" /></svg>IntegrateVariables1</span></li>
          <li class="h-[22px] flex items-center"><button aria-label="Hide" class="w-[22px]"><svg class="w-[14px] h-[10px]"><use href="#i-eye" /></svg></button><span class="flex items-center gap-[3px] px-px"><svg class="size-4"><use href="#i-plot" /></svg>PlotDataOverTime1</span></li>
        </ul>
        <div class="h-[7px] shrink-0 flex items-center justify-center">
          <svg class="w-4 h-px" viewBox="0 0 16 1"><path d="M0 .5h16" stroke="#999" stroke-dasharray="1 2" /></svg>
        </div>

        <div class="h-[26px] shrink-0 flex items-end relative">
          <div class="absolute inset-x-0 bottom-0 border-b border-[#b4b4b4]"></div>
          <button class="relative w-[87px] h-[26px] pr-px border border-b-0 border-[#b4b4b4] rounded-t-[3px] bg-linear-to-b from-white to-[#efefef]">Properties</button>
          <button class="relative w-[93px] h-6 border border-l-0 border-[#b4b4b4] rounded-tr-[3px] bg-[#dedede]">Information</button>
        </div>
        <div class="h-[21px] shrink-0 flex items-center gap-[3px] pl-1 pr-[2px]">
          <h2 class="flex-1">Properties</h2>
          <button aria-label="Float"><svg class="size-[11px]"><use href="#i-float" /></svg></button>
          <button aria-label="Close"><svg class="size-[11px]"><use href="#i-close" /></svg></button>
        </div>

        <div class="shrink-0 pl-[9px] pr-[9px] pt-[7px]">
          <div class="grid grid-cols-4 gap-0.5 h-6">
            <button disabled class="flex items-center justify-center gap-[3px] rounded-[3px] border border-[#bcbcbc] bg-linear-to-b from-[#f6f6f6] to-[#ececec] text-[#bebebe]"><svg class="size-3"><use href="#i-apply" /></svg>Apply</button>
            <button disabled class="flex items-center justify-center gap-0.5 rounded-[3px] border border-[#bcbcbc] bg-linear-to-b from-[#f6f6f6] to-[#ececec] text-[#bebebe]"><svg class="size-[14px]"><use href="#i-ban" /></svg>Reset</button>
            <button disabled class="flex items-center justify-center gap-[3px] rounded-[3px] border border-[#bcbcbc] bg-linear-to-b from-[#f6f6f6] to-[#ececec] text-[#bebebe]"><svg class="size-3"><use href="#i-cross" /></svg>Delete</button>
            <button class="flex items-center justify-center rounded-[3px] border border-[#a8a8a8] bg-linear-to-b from-white to-[#eee] text-[#8fb878] text-base font-bold">?</button>
          </div>
          <div class="flex gap-0.5 mt-[6px]">
            <input type="text" aria-label="Search" placeholder="Search ... (use Esc to clear text)" class="flex-1 min-w-0 h-[23px] px-[2px] rounded-[3px] border border-[#a8a8a8] bg-white outline-none placeholder:text-[#808080]" />
            <button aria-label="Advanced" class="w-6 h-[23px] flex items-center justify-center rounded-[3px] border border-[#a8a8a8] bg-linear-to-b from-white to-[#eee]"><svg class="size-[15px]"><use href="#i-gear" /></svg></button>
          </div>
        </div>

        <div class="flex-1 min-h-0 flex mt-[6px] mb-[7px] pl-[9px] pr-[9px]">
          <div class="w-[318px] overflow-hidden">
            <!-- Calculator -->
            <div class="flex items-center gap-1 h-[26px]">
              <div class="w-[190px] h-[26px] flex items-center gap-[7px] pl-[11px] pr-[9px] border border-[#b4b4b4]">
                <div class="w-[13px] h-[5px] shrink-0 bg-[#3592c8] border border-[#7ea8c0]"></div>
                <h3 class="font-bold whitespace-nowrap overflow-hidden">Properties (Calculator1)</h3>
              </div>
              <button aria-label="Copy" class="w-7 h-6 flex items-center justify-center rounded-[3px] border border-[#a8a8a8] bg-linear-to-b from-white to-[#eee]"><svg class="size-4"><use href="#i-copy" /></svg></button>
              <button aria-label="Paste" disabled class="w-7 h-6 flex items-center justify-center rounded-[3px] border border-[#c6c6c6] bg-linear-to-b from-[#f6f6f6] to-[#ececec]"><svg class="size-4"><use href="#i-paste" /></svg></button>
              <button aria-label="Restore" class="w-7 h-6 flex items-center justify-center rounded-[3px] border border-[#a8a8a8] bg-linear-to-b from-white to-[#eee] text-[#3a8fbf]"><svg class="size-4"><use href="#i-refresh" /></svg></button>
              <button aria-label="Save" class="w-7 h-6 flex items-center justify-center rounded-[3px] border border-[#a8a8a8] bg-linear-to-b from-white to-[#eee] text-[#3f6fb5]"><svg class="size-4"><use href="#i-floppy" /></svg></button>
            </div>
            <div class="flex mt-[6px]">
              <label for="attr" class="w-[118px]">Attribute Type</label>
              <div class="relative flex-1">
                <select id="attr" class="appearance-none block w-full h-6 pl-6 rounded-[3px] border border-[#a8a8a8] bg-linear-to-b from-white to-[#eee]"><option>Cell Data</option></select>
                <svg class="absolute left-[6px] top-[5px] size-[14px]"><use href="#i-cell" /></svg>
                <svg class="absolute right-[7px] top-[9px] w-2 h-[5px] text-[#555]"><use href="#i-down" /></svg>
              </div>
            </div>
            <div class="flex items-center gap-[5px] mt-[6px] h-4">
              <input id="coord" type="checkbox" class="appearance-none size-[14px] border border-[#b4b4b4] bg-white" />
              <label for="coord">Coordinate Results</label>
            </div>
            <div class="flex mt-[7px]">
              <label for="result" class="w-[118px]">Result Array Name</label>
              <input id="result" type="text" value="Massflow" class="flex-1 min-w-0 h-[23px] px-[2px] rounded-[3px] border border-[#a8a8a8] bg-white outline-none" />
            </div>
            <input aria-label="Expression" type="text" value="F0_Density_SG_water*F0_Velocity_SG_water_Z" class="block w-full h-[23px] mt-1 px-[2px] rounded-[3px] border border-[#a8a8a8] bg-white outline-none" />
            <div class="calc-grid grid grid-cols-6"></div>
            <div class="grid grid-cols-2">
              <button class="relative h-[23px] pr-3 rounded-[3px] border border-[#a8a8a8] bg-linear-to-b from-white to-[#eee]">Scalars<svg class="absolute right-1 top-[8px] w-[6px] h-1 text-[#555]"><use href="#i-down" /></svg></button>
              <button class="relative h-[23px] pr-3 rounded-[3px] border border-[#a8a8a8] bg-linear-to-b from-white to-[#eee]">Vectors<svg class="absolute right-1 top-[8px] w-[6px] h-1 text-[#555]"><use href="#i-down" /></svg></button>
            </div>

            <!-- Display -->
            <div class="flex items-center gap-1 h-[26px] mt-[6px]">
              <div class="w-[190px] h-[26px] flex items-center gap-[7px] pl-[11px] pr-[9px] border border-[#b4b4b4]">
                <div class="w-[13px] h-[5px] shrink-0 bg-[#3592c8] border border-[#7ea8c0]"></div>
                <h3 class="font-bold whitespace-nowrap overflow-hidden">Display</h3>
              </div>
              <button aria-label="Copy" disabled class="w-7 h-6 flex items-center justify-center rounded-[3px] border border-[#c6c6c6] bg-linear-to-b from-[#f6f6f6] to-[#ececec]"><svg class="size-4 grayscale opacity-60"><use href="#i-copy" /></svg></button>
              <button aria-label="Paste" disabled class="w-7 h-6 flex items-center justify-center rounded-[3px] border border-[#c6c6c6] bg-linear-to-b from-[#f6f6f6] to-[#ececec]"><svg class="size-4"><use href="#i-paste" /></svg></button>
              <button aria-label="Restore" disabled class="w-7 h-6 flex items-center justify-center rounded-[3px] border border-[#c6c6c6] bg-linear-to-b from-[#f6f6f6] to-[#ececec] text-[#aaa]"><svg class="size-4"><use href="#i-refresh" /></svg></button>
              <button aria-label="Save" disabled class="w-7 h-6 flex items-center justify-center rounded-[3px] border border-[#c6c6c6] bg-linear-to-b from-[#f6f6f6] to-[#ececec] text-[#aaa]"><svg class="size-4"><use href="#i-floppy" /></svg></button>
            </div>

            <!-- View -->
            <div class="flex items-center gap-1 h-[26px] mt-3">
              <div class="w-[190px] h-[26px] flex items-center gap-[7px] pl-[11px] pr-[9px] border border-[#b4b4b4]">
                <div class="w-[13px] h-[5px] shrink-0 bg-[#3592c8] border border-[#7ea8c0]"></div>
                <h3 class="font-bold whitespace-nowrap overflow-hidden">View (Quartile Chart View)</h3>
              </div>
              <button aria-label="Copy" class="w-7 h-6 flex items-center justify-center rounded-[3px] border border-[#a8a8a8] bg-linear-to-b from-white to-[#eee]"><svg class="size-4"><use href="#i-copy" /></svg></button>
              <button aria-label="Paste" disabled class="w-7 h-6 flex items-center justify-center rounded-[3px] border border-[#c6c6c6] bg-linear-to-b from-[#f6f6f6] to-[#ececec]"><svg class="size-4"><use href="#i-paste" /></svg></button>
              <button aria-label="Restore" class="w-7 h-6 flex items-center justify-center rounded-[3px] border border-[#a8a8a8] bg-linear-to-b from-white to-[#eee] text-[#3a8fbf]"><svg class="size-4"><use href="#i-refresh" /></svg></button>
              <button aria-label="Save" class="w-7 h-6 flex items-center justify-center rounded-[3px] border border-[#a8a8a8] bg-linear-to-b from-white to-[#eee] text-[#3f6fb5]"><svg class="size-4"><use href="#i-floppy" /></svg></button>
            </div>
            <h4 class="font-bold mt-[9px] border-b border-[#a0a0a0]">Title</h4>
            <div class="flex mt-[6px]">
              <label for="chart-title" class="w-[119px]">Chart Title</label>
              <input id="chart-title" type="text" placeholder="Use ${TIME} to display curre..." class="flex-1 min-w-0 h-[23px] px-[2px] rounded-[3px] border border-[#a8a8a8] bg-white outline-none placeholder:text-[#808080]" />
            </div>
            <h4 class="font-bold mt-[7px] border-b border-[#a0a0a0]">Annotation</h4>
          </div>
          <!-- Scrollbar -->
          <div class="w-[14px] flex flex-col border-l border-[#b4b4b4] bg-[#e4e4e4]">
            <div class="h-[14px] flex items-center justify-center bg-[#fafafa] border-b border-[#b4b4b4]"><svg class="w-2 h-[5px] text-[#555]"><use href="#i-up" /></svg></div>
            <div class="h-[191px] bg-linear-to-r from-[#fcfcfc] to-[#f0f0f0] border-b border-[#b4b4b4]"></div>
            <div class="flex-1"></div>
            <div class="h-[14px] flex items-center justify-center bg-[#fafafa] border-t border-[#b4b4b4]"><svg class="w-2 h-[5px] text-[#555]"><use href="#i-down" /></svg></div>
          </div>
        </div>
      </aside>

      <div class="w-[6px] shrink-0 flex flex-col items-center justify-center">
        <svg class="w-px h-4" viewBox="0 0 1 16"><path d="M.5 0v16" stroke="#999" stroke-dasharray="1 2" /></svg>
      </div>

      <!-- Views -->
      <section class="flex-1 min-w-0 flex flex-col pt-px">
        <div class="h-[27px] shrink-0 flex items-end relative">
          <div class="absolute inset-x-0 bottom-0 border-b border-[#b4b4b4]"></div>
          <div class="relative w-[123px] h-[27px] flex items-center pl-[11px] border border-b-0 border-[#b4b4b4] rounded-t-[3px] bg-linear-to-b from-white to-[#f8f8f8]">
            <svg class="size-4"><use href="#i-window" /></svg>
            <button class="ml-1">Layout #1</button>
            <button aria-label="Close layout" class="ml-1"><svg class="size-[11px]"><use href="#i-close" /></svg></button>
          </div>
          <div class="relative w-[122px] h-[25px] flex items-center pl-[11px] border border-l-0 border-[#b4b4b4] bg-[#e6e6e6]">
            <svg class="size-4"><use href="#i-window" /></svg>
            <button class="ml-1">Layout #2</button>
            <button aria-label="Close layout" class="ml-1"><svg class="size-[11px]"><use href="#i-close" /></svg></button>
          </div>
          <button class="relative w-[34px] h-[25px] border border-l-0 border-[#b4b4b4] rounded-tr-[3px] bg-[#e6e6e6]">+</button>
        </div>

        <div class="flex-1 min-h-0 flex flex-col border-x border-b border-[#b4b4b4] pl-px">
          <div class="h-[27px] shrink-0 flex items-center pl-1 pb-0.5">
            <button aria-label="Capture"><svg class="size-[18px]"><use href="#i-snap" /></svg></button>
            <div class="w-px h-3 mx-[7px] bg-[#cfcfcf]"></div>
            <div class="flex gap-[10px]">
              <button aria-label="Add selection"><svg class="size-4"><use href="#i-boxplus" /></svg></button>
              <button aria-label="Subtract selection"><svg class="size-4"><use href="#i-boxminus" /></svg></button>
              <button aria-label="Toggle selection"><svg class="size-4"><use href="#i-boxtoggle" /></svg></button>
            </div>
            <div class="w-px h-3 ml-2 mr-[6px] bg-[#cfcfcf]"></div>
            <div class="flex gap-[10px]">
              <button aria-label="Select points"><svg class="w-[17px] h-4"><use href="#i-boxpts" /></svg></button>
              <button aria-label="Select block"><svg class="size-4"><use href="#i-boxzoom" /></svg></button>
            </div>
            <h2 class="ml-auto mr-[11px] font-bold underline underline-offset-2">QuartileChartView1</h2>
            <button aria-label="Restore view" class="w-[26px] h-[25px] mr-px flex items-center justify-center rounded-[3px] border border-[#b4b4b4] bg-linear-to-b from-white to-[#eee]"><svg class="size-[11px]"><use href="#i-float" /></svg></button>
          </div>
          <div class="flex-1 min-h-0 mr-px border-2 border-[#0000ff] bg-white overflow-hidden">
            <svg class="chart block w-full h-full"></svg>
          </div>
        </div>
      </section>
    </main>

    <!-- Status bar -->
    <footer class="h-[26px] shrink-0 flex items-center gap-[3px]">
      <div class="flex-1"></div>
      <button aria-label="Abort" class="size-[18px] flex items-center justify-center rounded-[3px] border border-[#bcbcbc] bg-linear-to-b from-white to-[#ececec]"><svg class="size-2"><use href="#i-cross" /></svg></button>
      <div class="w-[784px] h-[18px] border border-r-0 border-[#999] border-b-white"></div>
    </footer>
  </body>
  <script type="text/javascript">
    const keys = [
      "Clear", "(", ")", "iHat", "jHat", "kHat",
      "sin", "cos", "tan", "abs", "sqrt", "+",
      "asin", "acos", "atan", "ceil", "floor", "-",
      "sinh", "cosh", "tanh", "x^y", "exp", "*",
      "v1.v2", "mag", "norm", "ln", "log10", "/",
    ];
    const grid = document.querySelector(".calc-grid");
    keys.forEach((key) => {
      const button = document.createElement("button");
      button.className =
        "h-[22px] rounded-[3px] border border-[#a8a8a8] bg-linear-to-b from-white to-[#eee]";
      button.textContent = key;
      grid.appendChild(button);
    });

    const drawChart = () => {
      const chart = document.querySelector(".chart");
      const w = chart.clientWidth;
      const h = chart.clientHeight;
      const left = 36;
      const right = w - 21;
      const top = 21;
      const bottom = h - 28;
      // x = 0 and y = 0 sit a little inside the axes
      const x = (v) => Math.round(left + 9 + (v * (right - left - 9)) / 10.93);
      const y = (v) => Math.round(bottom - 6 - (v * (bottom - top - 6)) / 413.8);

      let svg = "";
      for (let v = 0; v <= 400; v += 20) {
        svg += `<path d="M${left} ${y(v) + 0.5}H${right}" stroke="#f0f0f0"/>`;
        svg += `<path d="M${left - 5} ${y(v) + 0.5}H${left}" stroke="#000"/>`;
        svg += `<text x="${left - 5}" y="${y(v) + 4}" text-anchor="end">${v}</text>`;
      }
      for (let v = 0; v <= 10.5; v += 0.5) {
        svg += `<path d="M${x(v) - 0.5} ${top}V${bottom}" stroke="#f0f0f0"/>`;
        svg += `<path d="M${x(v) - 0.5} ${bottom}v5" stroke="#000"/>`;
        svg += `<text x="${x(v)}" y="${bottom + 15}" text-anchor="middle">${v}</text>`;
      }
      svg += `<path d="M${left + 0.5} ${top}V${bottom + 0.5}H${right}" fill="none" stroke="#000"/>`;
      svg += `<path d="M${x(9.93)} ${top + 20}V${bottom}" stroke="#8fd672" stroke-width="2"/>`;
      svg += `<path d="M${x(0)} ${y(0)}L${x(1)} ${y(373.6)}H${x(10)}" fill="none" stroke="#4daf4a" stroke-width="2" stroke-linejoin="round"/>`;
      svg += `<rect x="${right - 124.5}" y="${top - 0.5}" width="125" height="22" fill="#fff" stroke="#000"/>`;
      svg += `<path d="M${right - 120} ${top + 11}h22" stroke="#4daf4a" stroke-width="2"/>`;
      svg += `<text x="${right - 95}" y="${top + 14}" font-size="13">Massflow (stats)</text>`;
      chart.innerHTML = `<g font-family="Lato, sans-serif" font-size="12" fill="#222">${svg}</g>`;
    };

    window.onload = drawChart;
    window.onresize = drawChart;
  </script>
</html>
